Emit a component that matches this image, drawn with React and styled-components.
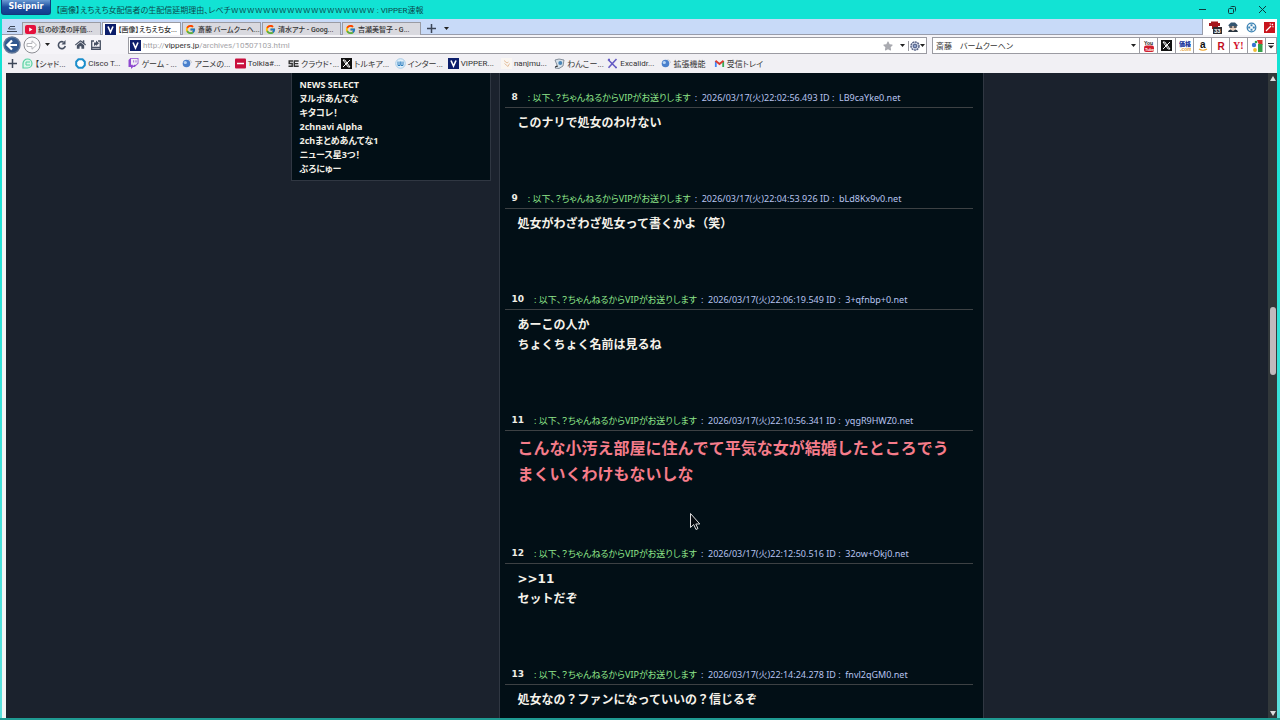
import React from 'react'
import styled, { createGlobalStyle } from 'styled-components'
import { FaHome, FaStar, FaTwitch } from 'react-icons/fa'
import { FcGoogle } from 'react-icons/fc'

const GlobalStyle = createGlobalStyle`
  * {
    box-sizing: border-box;
  }

  body {
    margin: 0;
    overflow: hidden;
    font-family: Roboto, "Noto Sans CJK JP", sans-serif;
    font-size: 8px;
    font-feature-settings: "palt";
    color: #333;
  }

  button, input {
    font: inherit;
    color: inherit;
    font-feature-settings: inherit;
  }

  a {
    color: inherit;
    text-decoration: none;
  }

  svg {
    display: block;
    flex: none;
  }
`

const Window = styled.div`
  position: relative;
  display: flex;
  flex-direction: column;
  height: 100vh;
  padding: 0 3px 0 2px;
  background: linear-gradient(#12e3d4 0, #12e3d4 75px, #5de0dc 100%);
  border-bottom: 2px solid #1f9a92;
`

const TitleBar = styled.header`
  display: flex;
  align-items: center;
  height: 19px;
  margin-left: -1px;
  color: #0b4a4d;
`

const Logo = styled.button`
  align-self: flex-start;
  width: 50px;
  height: 15px;
  padding: 0;
  border: 1px solid #123b7c;
  border-top: 0;
  border-radius: 0 0 3px 3px;
  background: linear-gradient(#6a9bd4, #1d4e9e 50%, #123f8c);
  color: #fff;
  font: bold 8px/14px "DejaVu Sans", sans-serif;
`

const Title = styled.h1`
  flex: 1;
  margin: 0 0 0 5px;
  font-size: 8px;
  font-weight: 400;
  white-space: nowrap;
`

const WindowButtons = styled.div`
  display: flex;
`

const WindowButton = styled.button`
  display: flex;
  align-items: center;
  justify-content: center;
  width: 30px;
  height: 19px;
  padding: 0;
  border: 0;
  background: none;
  color: #0d3a3d;
`

const TabBar = styled.nav`
  display: flex;
  height: 16px;
  background: #c8daf8;
  border-bottom: 1px solid #989cab;
`

const TabMenu = styled.button`
  width: 20px;
  padding: 4px 0 0 5px;
  border: 0;
  background: none;
`

const Tab = styled.a`
  display: flex;
  align-items: center;
  gap: 2px;
  width: 79px;
  height: 13px;
  margin: 3px 1px 0 0;
  padding: 0 2px;
  border: 1px solid #9a9ba3;
  border-bottom: 0;
  background: ${p => (p.$active ? '#fff' : '#d9d9df')};
  font-size: 7px;
  font-weight: 500;
  white-space: nowrap;
`

const TabButton = styled.button`
  display: flex;
  align-items: center;
  justify-content: center;
  width: 15px;
  padding: 3px 0 0 3px;
  border: 0;
  background: none;
`

const Extensions = styled.div`
  display: flex;
  align-items: center;
  gap: 6px;
  height: 16px;
  margin-left: auto;
  padding: 0 2px 0 6px;
  background: #fff;
  border-left: 1px solid #989cab;
`

const IconButton = styled.button`
  display: flex;
  align-items: center;
  justify-content: center;
  width: ${p => p.$width || 12}px;
  padding: 0;
  border: 0;
  background: none;
`

const ToolBar = styled.div`
  display: flex;
  align-items: center;
  height: 19px;
  background: #f5f4f8;
`

const AddressBar = styled.form`
  display: flex;
  flex: 1;
  align-items: center;
  height: 17px;
  margin: 2px 5px 0 24px;
  padding-left: 1px;
  border: 1px solid #9b9ba2;
  background: #fff;
`

const Address = styled.a`
  flex: 1;
  margin-left: 2px;
  color: #a4a4a8;

  b {
    font-weight: 400;
    color: #333;
  }
`

const SearchBar = styled.form`
  display: flex;
  height: 17px;
  margin-top: 2px;
  border: 1px solid #9b9ba2;
  background: #fff;
`

const SearchInput = styled.input`
  width: 194px;
  padding: 0 3px;
  border: 0;
  outline: 0;
  background: none;
`

const Engine = styled.button`
  display: flex;
  align-items: center;
  justify-content: center;
  width: ${p => p.$width || 18}px;
  padding: 0;
  border: 0;
  border-left: 1px solid #9b9ba2;
  background: #fff;
`

const BookmarkBar = styled.nav`
  display: flex;
  align-items: center;
  height: 19px;
  background: #f1f0f4;
`

const Bookmarks = styled.div`
  display: grid;
  grid-template-columns: repeat(14, 1fr);
  width: 745px;
`

const Bookmark = styled.a`
  display: flex;
  align-items: center;
  gap: 2px;
  white-space: nowrap;
`

const Viewport = styled.div`
  display: flex;
  flex: 1;
  min-height: 0;
  overflow: hidden;
  border-left: 4px solid #f4f4f4;
  background: #1b222d;
`

const Page = styled.div`
  display: flex;
  flex: 1;
  align-items: flex-start;
  justify-content: center;
  gap: 8px;
  min-width: 0;
`

const Sidebar = styled.aside`
  width: 200px;
  padding: 5px 8px 4px;
  border: 1px solid #303742;
  border-top: 0;
  background: #020f16;
`

const LinkList = styled.ul`
  margin: 0;
  padding: 0;
  list-style: none;
  color: #f2efe6;
  font-family: "Noto Sans", "Noto Sans CJK JP", sans-serif;
  font-size: 9px;
  font-weight: 700;
  line-height: 14px;
`

const Thread = styled.main`
  width: 485px;
  padding: 17px 10px 0 5px;
  border: 1px solid #303742;
  border-top: 0;
  background: #020f16;
`

const Post = styled.article`
  padding-bottom: 58px;
`

const PostHead = styled.header`
  display: flex;
  height: 18px;
  padding-left: 7px;
  border-bottom: 1px solid #3d4144;
  color: #b7c3ee;
  font-family: "Noto Sans", "Noto Sans CJK JP", sans-serif;
  font-size: 9px;
  line-height: 15px;
  white-space: pre;
`

const PostNumber = styled.b`
  margin-right: 10px;
  color: #f0eee6;
  font-family: "DejaVu Sans", sans-serif;
`

const PostName = styled.span`
  margin-right: 4px;
  color: #8fe68a;
`

const PostBody = styled.p`
  margin: 0;
  padding: 5px 13px 0;
  color: ${p => (p.$loud ? '#f57c8a' : '#f5f2ea')};
  font-family: "DejaVu Sans", "Noto Sans CJK JP", sans-serif;
  font-feature-settings: normal;
  font-size: ${p => (p.$loud ? 16 : 12)}px;
  font-weight: 700;
  line-height: ${p => (p.$loud ? 26 : 20)}px;
  white-space: pre-line;
`

const ScrollTrack = styled.div`
  display: flex;
  flex-direction: column;
  align-items: center;
  width: 9px;
  padding: 3px 0 2px;
  background: #32383a;
`

const ScrollThumb = styled.div`
  width: 6px;
  height: 68px;
  margin-top: 226px;
  margin-bottom: auto;
  border-radius: 3px;
  background: #c0babd;
`

const Pointer = styled.svg`
  position: absolute;
  left: 690px;
  top: 513px;
`

const Caret = () => (
  <svg width="5" height="3" viewBox="0 0 5 3"><path d="M0 0h5L2.5 3z" fill="#222" /></svg>
)

const PlusIcon = () => (
  <svg width="9" height="9" viewBox="0 0 9 9"><path d="M4.5 0v9M0 4.5h9" stroke="#3c4657" strokeWidth="1.5" /></svg>
)

const VIcon = () => (
  <svg width="11" height="11" viewBox="0 0 11 11">
    <rect width="11" height="11" fill="#0c1e6b" />
    <path d="M3 2.5 5.5 8 8 2.5" fill="none" stroke="#fff" strokeWidth="1.6" />
  </svg>
)

const YouTubeIcon = () => (
  <svg width="11" height="11" viewBox="0 0 11 11">
    <rect y="1" width="11" height="9" rx="2" fill="#e5103c" />
    <path d="M4.2 3.5v4l3.3-2z" fill="#fff" />
  </svg>
)

const XIcon = () => (
  <svg width="11" height="11" viewBox="0 0 11 11">
    <rect width="11" height="11" fill="#111" />
    <path d="M2 2h1.8L9 9H7.2zM9 2 2 9" fill="none" stroke="#fff" strokeWidth="1" />
  </svg>
)

const GlobeIcon = () => (
  <svg width="11" height="11" viewBox="0 0 11 11">
    <circle cx="4.5" cy="5.5" r="3.8" fill="#4a80cc" />
    <circle cx="3.3" cy="4.5" r="1.6" fill="#b8d5f5" />
    <path d="M6.5 1.5q3 .5 3 3.5" fill="none" stroke="#c8ccd4" />
  </svg>
)

const ChatIcon = () => (
  <svg width="11" height="11" viewBox="0 0 11 11">
    <path d="M1 10V5.5a4.5 4.5 0 1 1 4.5 4.5z" fill="#d9f7ea" stroke="#55cfa0" strokeWidth="1.2" />
    <path d="M8 4H4v3h4" fill="none" stroke="#55cfa0" />
  </svg>
)

const CiscoIcon = () => (
  <svg width="11" height="11" viewBox="0 0 11 11">
    <path d="M3.5 1.3h4l2.3 2.5v3.5L7.5 9.7h-4L1.2 7.3V3.8z" fill="#fff" stroke="#1b8ecb" strokeWidth="2" strokeLinejoin="round" />
  </svg>
)

const TolkiaIcon = () => (
  <svg width="11" height="11" viewBox="0 0 11 11">
    <rect y=".5" width="11" height="10" rx="1" fill="#c9103d" />
    <path d="M2 5.5h7" stroke="#fff" strokeWidth="1.5" />
  </svg>
)

const CloudIcon = () => (
  <svg width="11" height="11" viewBox="0 0 11 11">
    <path d="M5 3H1.2v2.5h3v2.7H.5M10.7 3H6.3v5.2h4.4M6.3 5.6h4" fill="none" stroke="#333" strokeWidth="1.4" />
  </svg>
)

const InternetIcon = () => (
  <svg width="11" height="11" viewBox="0 0 11 11">
    <circle cx="5.5" cy="5.5" r="4.8" fill="#e1effa" stroke="#a7cbe6" />
    <path d="M3 3.5v4h2v-4M6 3.5v4h2v-4" fill="none" stroke="#2c7fc0" />
  </svg>
)

const NanjIcon = () => (
  <svg width="11" height="11" viewBox="0 0 11 11">
    <rect width="11" height="11" fill="#faf6f2" />
    <path d="M3 2.5 6 5l1.5-1M3.5 5.5l3.5 3 1.5-3" fill="none" stroke="#e5bf9d" />
  </svg>
)

const DogIcon = () => (
  <svg width="11" height="11" viewBox="0 0 11 11">
    <path d="m1 2 4-1 5 1-1 6-4 2.5L1 10l2-3z" fill="#d7e1ea" stroke="#6d7886" strokeWidth=".8" />
    <circle cx="6.3" cy="5" r="2" fill="#4c87b8" />
    <path d="m1 9 3-1" stroke="#333" />
  </svg>
)

const ExcalidrawIcon = () => (
  <svg width="11" height="11" viewBox="0 0 11 11">
    <path d="M1 1.5 9 9.5M9.5 1 1.5 9.8M1 1.5h2M8 9.5h2" fill="none" stroke="#665cc4" strokeWidth="1.6" />
  </svg>
)

const GmailIcon = () => (
  <svg width="11" height="11" viewBox="0 0 11 11">
    <path d="M1.8 9V3" stroke="#4285f4" strokeWidth="1.8" />
    <path d="M9.2 9V3" stroke="#34a853" strokeWidth="1.8" />
    <path d="m1.5 2.8 4 3.2 4-3.2" fill="none" stroke="#db3b30" strokeWidth="1.9" />
  </svg>
)

const BackIcon = () => (
  <svg width="18" height="18" viewBox="0 0 18 18">
    <circle cx="9" cy="9" r="8" fill="#31588f" stroke="#627898" strokeWidth="1.5" />
    <path d="M14 9H5M9 4.5 4.5 9 9 13.5" fill="none" stroke="#fff" strokeWidth="2.2" />
  </svg>
)

const ForwardIcon = () => (
  <svg width="18" height="18" viewBox="0 0 18 18">
    <circle cx="9" cy="9" r="8" fill="#fafafc" stroke="#8c8d93" />
    <path d="M4 7.5h5V4.8L13.5 9 9 13.2v-2.7H4z" fill="#fff" stroke="#b4b5ba" />
  </svg>
)

const ReloadIcon = () => (
  <svg width="10" height="10" viewBox="0 0 10 10">
    <path d="M8.3 6A3.5 3.5 0 1 1 6.5 2" fill="none" stroke="#485163" strokeWidth="1.6" />
    <path d="M8.5 0v4.5h-4z" fill="#485163" />
  </svg>
)

const ShareIcon = () => (
  <svg width="10" height="10" viewBox="0 0 10 10">
    <path d="M3 1H.7v8.3h8.6V1H7M.7 7.5h8.6" fill="none" stroke="#485163" strokeWidth="1.3" />
    <path d="M3 6V2.5h2v-2l3 2.7L5 6V4.7z" fill="#485163" />
  </svg>
)

const GearIcon = () => (
  <svg width="10" height="10" viewBox="0 0 10 10">
    <circle cx="5" cy="5" r="4" fill="#dfe5f2" stroke="#596487" strokeWidth="1.5" strokeDasharray="2 .6" />
    <circle cx="5" cy="5" r="1.9" fill="#8ea2cc" stroke="#4a5880" />
  </svg>
)

const BlockerIcon = () => (
  <svg width="13" height="13" viewBox="0 0 13 13">
    <path d="M0 2h2V.5h7V2h2v3H9v3H3V5H0z" fill="#a5161c" />
    <rect x="4" y="6" width="9" height="7" fill="#2c2c30" />
    <text x="5" y="12" fill="#fff" fontSize="6" fontWeight="700" fontFamily="Liberation Sans">33</text>
  </svg>
)

const AgentIcon = () => (
  <svg width="10" height="10" viewBox="0 0 10 10">
    <path d="M.5 3 3 .5h4L9.5 3v1h-9z" fill="#34546e" />
    <path d="M2 4h6v3.5L5 9 2 7.5z" fill="#ecd0bc" />
    <path d="M1 4.2h3.3v1.6H1.5zM5.7 4.2H9l-.5 1.6H5.7z" fill="#26323e" />
    <path d="M0 10q.5-2.500 2.500-2.500L5 9l2.500-1.500Q9.500 7.500 10 10z" fill="#26323e" />
  </svg>
)

const TargetIcon = () => (
  <svg width="11" height="11" viewBox="0 0 11 11">
    <circle cx="5.5" cy="5.5" r="4.3" fill="#fff" stroke="#3c83b4" strokeWidth="1.3" />
    <path d="M5.500 2.200v2M5.500 6.800v2M2.200 5.500h2M6.800 5.500h2" stroke="#3c83b4" strokeWidth="2" />
  </svg>
)

const WandIcon = () => (
  <svg width="11" height="11" viewBox="0 0 11 11">
    <rect width="11" height="11" fill="#c8141d" />
    <path d="m2 9 5-5M6 1.5l.5 1M9.5 5l-1-.5M9 2 7.8 3.2" stroke="#fff" strokeWidth="1.2" />
  </svg>
)

const YouTubeSearchIcon = () => (
  <svg width="12" height="12" viewBox="0 0 12 12">
    <text x="1" y="5" fill="#222" fontSize="5" fontWeight="700" fontFamily="Liberation Sans">You</text>
    <rect x="1" y="5.5" width="10" height="6.5" rx="2" fill="#d1202e" />
    <text x="2" y="10.5" fill="#fff" fontSize="4" fontWeight="700" fontFamily="Liberation Sans">Tube</text>
  </svg>
)

const KakakuIcon = () => (
  <svg width="12" height="12" viewBox="0 0 12 12">
    <text x="0" y="6" fill="#20369c" fontSize="6" fontWeight="900" fontFamily="Noto Sans CJK JP">価格</text>
    <text x="1" y="11" fill="#e5a23a" fontSize="5" fontWeight="700" fontFamily="Liberation Sans">.com</text>
  </svg>
)

const AmazonIcon = () => (
  <svg width="12" height="12" viewBox="0 0 12 12">
    <text x="3" y="8" fill="#111" fontSize="10" fontWeight="700" fontFamily="Liberation Sans">a</text>
    <path d="M2 9q4 2.500 8 0" fill="none" stroke="#f0a52c" strokeWidth="1.2" />
  </svg>
)

const RakutenIcon = () => (
  <svg width="12" height="12" viewBox="0 0 12 12">
    <text x="2.5" y="9.5" fill="#bf0d22" fontSize="10" fontWeight="700" fontFamily="Liberation Sans">R</text>
  </svg>
)

const YahooIcon = () => (
  <svg width="12" height="12" viewBox="0 0 12 12">
    <text x="0" y="9" fill="#d4122e" fontSize="10" fontWeight="700" fontFamily="Liberation Serif">Y!</text>
  </svg>
)

const GoogleSearchIcon = () => (
  <svg width="12" height="12" viewBox="0 0 12 12">
    <path d="M6 0h5.5v5H8z" fill="#d8332c" />
    <path d="M7 4h4.5v8H7z" fill="#34a04b" />
    <circle cx="3" cy="5" r="2.2" fill="#3774d4" />
    <circle cx="4" cy="10" r="1.9" fill="#efbd31" />
    <circle cx="5" cy="2" r="1.3" fill="#34a04b" />
  </svg>
)

const TABS = [
  { icon: <YouTubeIcon />, label: '紅の砂漠の評価...' },
  { icon: <VIcon />, label: '【画像】えちえち女...', active: true },
  { icon: <FcGoogle size={11} />, label: '斎藤 バームクーヘ...' },
  { icon: <FcGoogle size={11} />, label: '清水アナ - Goog...' },
  { icon: <FcGoogle size={11} />, label: '吉瀬美智子 - G...' },
]

const BOOKMARKS = [
  { icon: <ChatIcon />, label: '【シャド...' },
  { icon: <CiscoIcon />, label: 'Cisco T...' },
  { icon: <FaTwitch size={11} color="#8e4ad0" />, label: 'ゲーム - ...' },
  { icon: <GlobeIcon />, label: 'アニメの...' },
  { icon: <TolkiaIcon />, label: 'Tolkia#...' },
  { icon: <CloudIcon />, label: 'クラウド･...' },
  { icon: <XIcon />, label: 'トルキア...' },
  { icon: <InternetIcon />, label: 'インター...' },
  { icon: <VIcon />, label: 'VIPPER...' },
  { icon: <NanjIcon />, label: 'nanjmu...' },
  { icon: <DogIcon />, label: 'わんこー...' },
  { icon: <ExcalidrawIcon />, label: 'Excalidr...' },
  { icon: <GlobeIcon />, label: '拡張機能' },
  { icon: <GmailIcon />, label: '受信トレイ' },
]

const ENGINES = [
  { name: 'YouTube', icon: <YouTubeSearchIcon /> },
  { name: 'X', icon: <XIcon /> },
  { name: '価格.com', icon: <KakakuIcon /> },
  { name: 'Amazon', icon: <AmazonIcon /> },
  { name: '楽天', icon: <RakutenIcon /> },
  { name: 'Yahoo!', icon: <YahooIcon /> },
  { name: 'Google', icon: <GoogleSearchIcon /> },
]

const LINKS = [
  'NEWS SELECT',
  'ヌルポあんてな',
  'キタコレ！',
  '2chnavi Alpha',
  '2chまとめあんてな1',
  'ニュース星3つ！',
  'ぶろにゅー',
]

const POSTS = [
  { no: 8, date: '2026/03/17(火)22:02:56.493', id: 'LB9caYke0.net', text: 'このナリで処女のわけない' },
  { no: 9, date: '2026/03/17(火)22:04:53.926', id: 'bLd8Kx9v0.net', text: '処女がわざわざ処女って書くかよ（笑）' },
  { no: 10, date: '2026/03/17(火)22:06:19.549', id: '3+qfnbp+0.net', text: 'あーこの人か\nちょくちょく名前は見るね' },
  {
    no: 11,
    date: '2026/03/17(火)22:10:56.341',
    id: 'yqgR9HWZ0.net',
    text: 'こんな小汚え部屋に住んでて平気な女が結婚したところでうまくいくわけもないしな',
    loud: true
  },
  { no: 12, date: '2026/03/17(火)22:12:50.516', id: '32ow+Okj0.net', text: '>>11\nセットだぞ' },
  { no: 13, date: '2026/03/17(火)22:14:24.278', id: 'fnvl2qGM0.net', text: '処女なの？ファンになっていいの？信じるぞ' },
]

export default class App extends React.Component {
  state = {
    query: '斎藤　バームクーヘン'
  }

  renderPost (post) {
    return (
      <Post key={post.no}>
        <PostHead>
          <PostNumber>{post.no}</PostNumber>
          <PostName>: 以下、？ちゃんねるからVIPがお送りします</PostName>
          <span>:  {post.date} ID :  {post.id}</span>
        </PostHead>
        <PostBody $loud={post.loud}>{post.text}</PostBody>
      </Post>
    )
  }

  render () {
    return (
      <Window>
        <GlobalStyle />
        <TitleBar>
          <Logo>Sleipnir</Logo>
          <Title>【画像】えちえち女配信者の生配信延期理由、レベチｗｗｗｗｗｗｗｗｗｗｗｗｗｗｗｗｗｗ : VIPPER速報</Title>
          <WindowButtons>
            <WindowButton aria-label="最小化">
              <svg width="7" height="7"><path d="M0 3.5h7" stroke="currentColor" /></svg>
            </WindowButton>
            <WindowButton aria-label="元に戻す">
              <svg width="8" height="8" fill="none" stroke="currentColor">
                <rect x=".5" y="2.5" width="5" height="5" rx="1" />
                <path d="M2.5 1q.3-.5 1-.5h3q1 0 1 1v3q0 .7-.5 1" />
              </svg>
            </WindowButton>
            <WindowButton aria-label="閉じる">
              <svg width="7" height="7"><path d="m0 0 7 7M7 0 0 7" stroke="currentColor" /></svg>
            </WindowButton>
          </WindowButtons>
        </TitleBar>

        <TabBar>
          <TabMenu aria-label="タブ一覧">
            <svg width="10" height="8" fill="none" stroke="#3c4657">
              <path d="M3 1.5h5M1.5 4h7M0 6.5h10M3 1.5 1.5 4" />
            </svg>
          </TabMenu>
          {TABS.map(tab => (
            <Tab key={tab.label} href="#" $active={tab.active}>{tab.icon}{tab.label}</Tab>
          ))}
          <TabButton aria-label="新しいタブ"><PlusIcon /></TabButton>
          <TabButton aria-label="タブメニュー"><Caret /></TabButton>
          <Extensions>
            <IconButton aria-label="ブロッカー"><BlockerIcon /></IconButton>
            <IconButton aria-label="ユーザーエージェント"><AgentIcon /></IconButton>
            <IconButton aria-label="ターゲット"><TargetIcon /></IconButton>
            <IconButton aria-label="ツール"><WandIcon /></IconButton>
          </Extensions>
        </TabBar>

        <ToolBar>
          <IconButton $width={20} aria-label="戻る"><BackIcon /></IconButton>
          <IconButton $width={20} aria-label="進む"><ForwardIcon /></IconButton>
          <IconButton $width={10} aria-label="履歴"><Caret /></IconButton>
          <IconButton $width={20} aria-label="更新"><ReloadIcon /></IconButton>
          <IconButton $width={16} aria-label="ホーム"><FaHome size={11} color="#485163" /></IconButton>
          <IconButton $width={16} aria-label="共有"><ShareIcon /></IconButton>
          <AddressBar>
            <VIcon />
            <Address href="#">http://<b>vippers.jp</b>/archives/10507103.html</Address>
            <IconButton type="button" $width={16} aria-label="お気に入り"><FaStar size={10} color="#a9aab0" /></IconButton>
            <IconButton type="button" aria-label="アドレス履歴"><Caret /></IconButton>
            <Engine type="button" aria-label="設定"><GearIcon /><Caret /></Engine>
          </AddressBar>
          <SearchBar onSubmit={e => e.preventDefault()}>
            <SearchInput
              aria-label="検索"
              value={this.state.query}
              onChange={e => this.setState({ query: e.target.value })} />
            <IconButton type="button" aria-label="検索履歴"><Caret /></IconButton>
            {ENGINES.map(engine => (
              <Engine key={engine.name} type="button" aria-label={engine.name}>{engine.icon}</Engine>
            ))}
            <Engine type="button" $width={11} aria-label="検索エンジン">
              <svg width="6" height="6"><path d="M0 .5h6" stroke="#222" /><path d="M0 2.5h6l-3 3z" fill="#222" /></svg>
            </Engine>
          </SearchBar>
        </ToolBar>

        <BookmarkBar>
          <IconButton $width={20} aria-label="お気に入りに追加"><PlusIcon /></IconButton>
          <Bookmarks>
            {BOOKMARKS.map(item => (
              <Bookmark key={item.label} href="#">{item.icon}{item.label}</Bookmark>
            ))}
          </Bookmarks>
        </BookmarkBar>

        <Viewport>
          <Page>
            <Sidebar>
              <LinkList>
                {LINKS.map(link => <li key={link}><a href="#">{link}</a></li>)}
              </LinkList>
            </Sidebar>
            <Thread>
              {POSTS.map(this.renderPost)}
            </Thread>
          </Page>
          <ScrollTrack>
            <svg width="6" height="5"><path d="m3 0 3 5H0z" fill="#ddd" /></svg>
            <ScrollThumb />
            <svg width="6" height="5"><path d="m3 5 3-5H0z" fill="#ddd" /></svg>
          </ScrollTrack>
        </Viewport>

        <Pointer width="11" height="18" viewBox="0 0 11 18">
          <path d="M.5.5v14l3.200-3 2.300 5 2-1-2.200-4.500h4z" fill="#05090e" stroke="#ddd" />
        </Pointer>
      </Window>
    )
  }
}
